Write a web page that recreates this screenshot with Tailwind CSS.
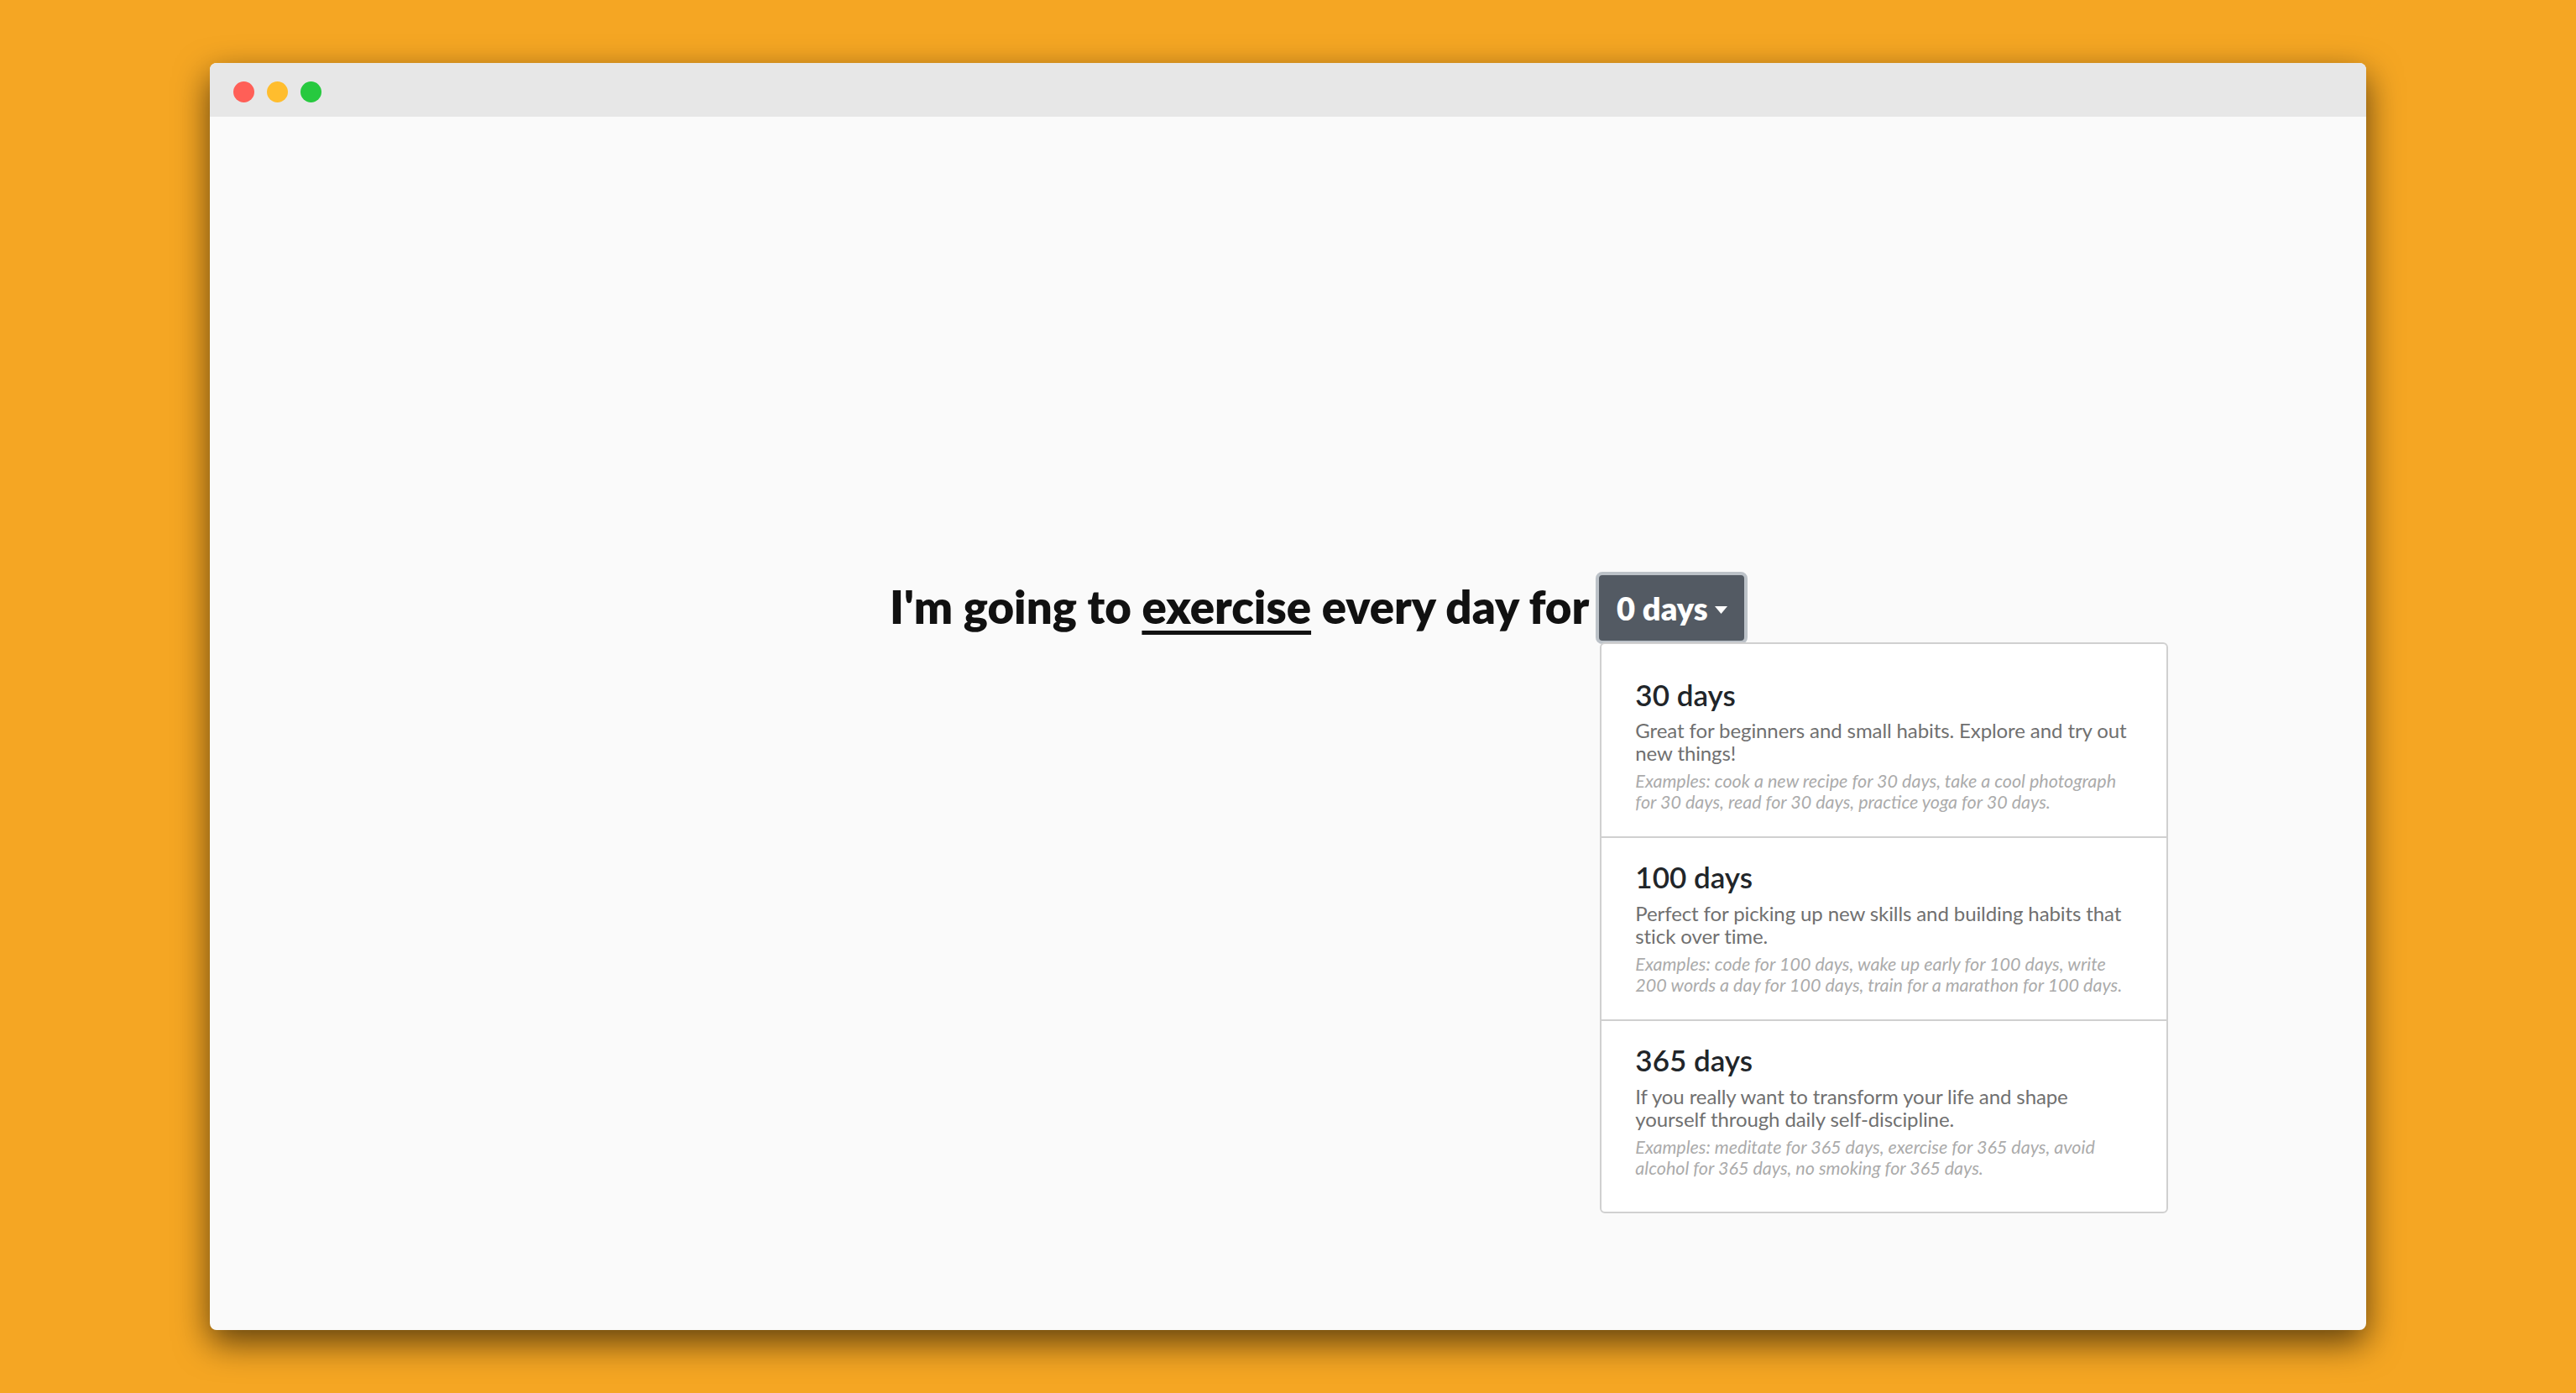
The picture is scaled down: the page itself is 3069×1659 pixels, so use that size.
<!DOCTYPE html>
<html>
  <head>
    <meta charset="utf-8" />
    <title>Challenge</title>
    <script src="https://cdn.jsdelivr.net/npm/@tailwindcss/browser@4"></script>
  </head>
  <body>
    <div class="flex h-screen w-full flex-col bg-[#f5a623] pt-[75px] pl-[250px] pr-[250px] overflow-hidden" style='font-family: Lato, "Open Sans", sans-serif;'>
      <div class="flex h-[1509px] flex-col rounded-[8px] bg-[#fafafa] shadow-[0_15px_40px_rgba(0,0,0,0.62)] overflow-hidden">
        <!-- title bar -->
        <div class="flex h-[64px] shrink-0 items-center gap-[15px] bg-[#e7e7e7] pt-[4px] pl-[28px]">
          <span class="size-[25px] rounded-full bg-[#ff5f57]"></span>
          <span class="size-[25px] rounded-full bg-[#ffbd2e]"></span>
          <span class="size-[25px] rounded-full bg-[#27c93f]"></span>
        </div>

        <div class="flex flex-col pt-[542px] pl-[810px]">
          <div class="flex items-center gap-[8px]">
            <h1 class="-mt-[5px] text-[54.5px] leading-[86px] font-extrabold whitespace-nowrap text-[#111111]">I'm going to <span class="underline decoration-[5px] underline-offset-[8px]">exercise</span> every day for</h1>
            <div class="relative">
              <button class="flex h-[86px] w-[181px] items-center justify-center gap-[8px] rounded-[8px] border-[4px] border-[#bcc2c8] bg-[#535a63] text-[38px] font-extrabold text-white">
                0 days
                <svg class="mt-[4px] h-[9px] w-[15px]" viewBox="0 0 15 9"><path d="M0 0H15L7.5 9Z" fill="#fff" /></svg>
              </button>

              <!-- dropdown menu -->
              <div class="absolute top-[84px] left-[5px] w-[677px] rounded-[6px] border-[2px] border-[#d0d0d0] bg-white">
                <div class="h-[231px] border-b-[2px] border-[#d0d0d0] px-[40px] pt-[38px]">
                  <h3 class="text-[35px] leading-[44px] font-semibold text-[#212529]">30 days</h3>
                  <p class="mt-[7px] text-[24px] leading-[27px] tracking-[-0.1px] text-[#707070]">Great for beginners and small habits. Explore and try out new things!</p>
                  <p class="mt-[8px] text-[21.5px] leading-[24.5px] text-[#ababab] italic">Examples: cook a new recipe for 30 days, take a cool photograph for 30 days, read for 30 days, practice yoga for 30 days.</p>
                </div>
                <div class="h-[218px] border-b-[2px] border-[#d0d0d0] px-[40px] pt-[24px]">
                  <h3 class="text-[35px] leading-[44px] font-semibold text-[#212529]">100 days</h3>
                  <p class="mt-[8px] text-[24px] leading-[27px] tracking-[-0.1px] text-[#707070]">Perfect for picking up new skills and building habits that stick over time.</p>
                  <p class="mt-[8px] text-[21.5px] leading-[24.5px] text-[#ababab] italic">Examples: code for 100 days, wake up early for 100 days, write 200 words a day for 100 days, train for a marathon for 100 days.</p>
                </div>
                <div class="h-[227px] px-[40px] pt-[24px]">
                  <h3 class="text-[35px] leading-[44px] font-semibold text-[#212529]">365 days</h3>
                  <p class="mt-[8px] text-[24px] leading-[27px] tracking-[-0.1px] text-[#707070]">If you really want to transform your life and shape yourself through daily self-discipline.</p>
                  <p class="mt-[8px] text-[21.5px] leading-[24.5px] text-[#ababab] italic">Examples: meditate for 365 days, exercise for 365 days, avoid alcohol for 365 days, no smoking for 365 days.</p>
                </div>
              </div>
            </div>
          </div>
        </div>
      </div>
    </div>
  </body>
</html>
